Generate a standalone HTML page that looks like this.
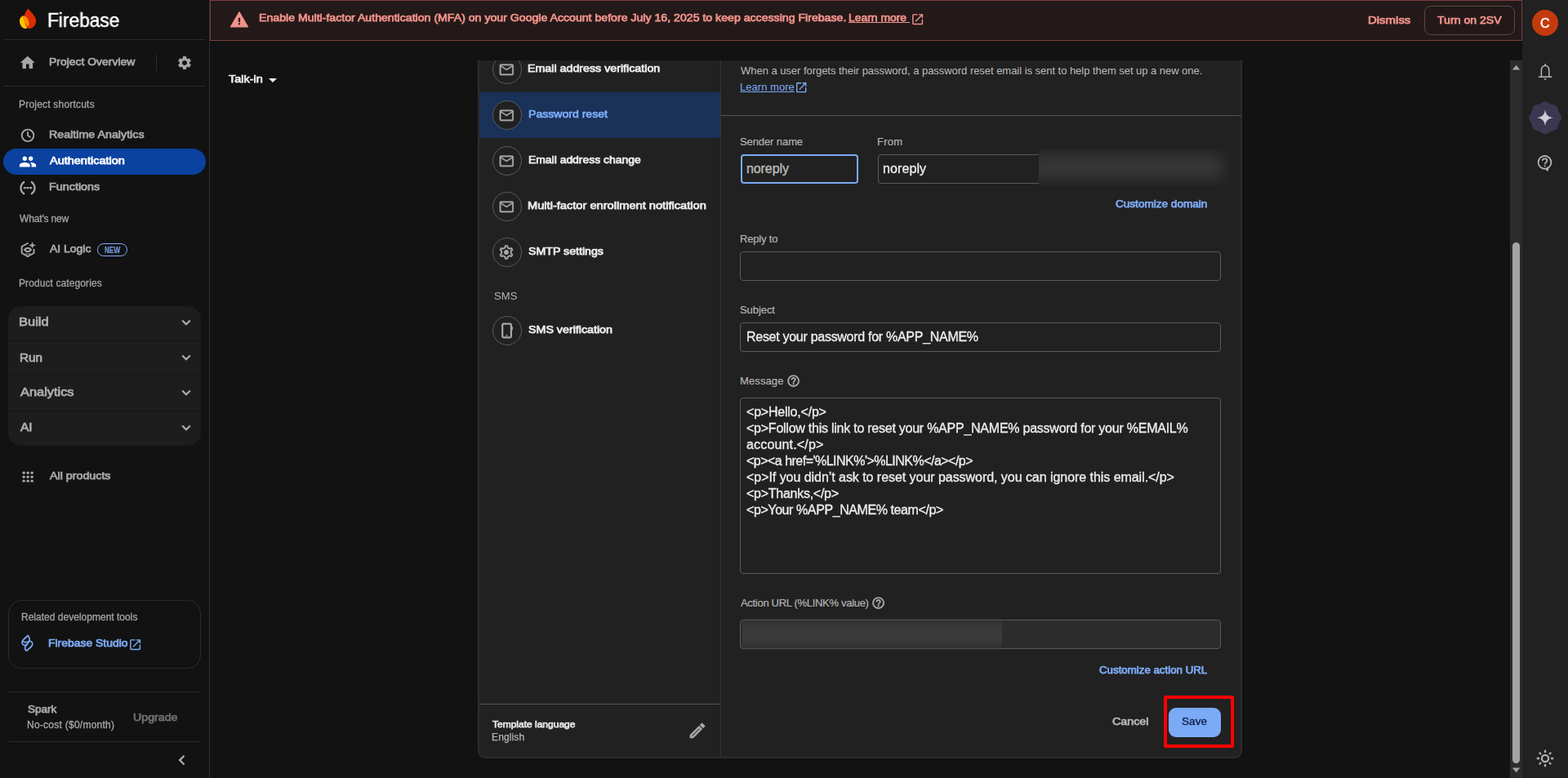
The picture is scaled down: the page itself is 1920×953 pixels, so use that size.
<!DOCTYPE html>
<html lang="en">
<head>
<meta charset="utf-8">
<title>Firebase console - Authentication templates</title>
<style>
*{box-sizing:border-box;margin:0;padding:0}
html,body{width:1920px;height:953px;overflow:hidden;background:#121212}
body{position:relative;font-family:"Liberation Sans",Arial,sans-serif;font-size:14px;color:#e3e3e3;-webkit-font-smoothing:antialiased}
.abs,.t,.ic{position:absolute}
.t{white-space:nowrap;line-height:20px;font-size:14px;will-change:transform;transform-origin:0 50%}
.lcd{will-change:auto}
.b{font-weight:normal;font-size:13px;-webkit-text-stroke:0.75px currentColor}
svg{display:block}
.ic svg{width:100%;height:100%}
/* ---------- sidebar ---------- */
#side{position:absolute;left:0;top:0;width:257px;height:953px;background:#121212;border-right:1px solid #2d2d2d}
.hr{position:absolute;height:1px;background:#2a2a2a}
.nav{color:#a8a8a8}
.sec{color:#a4a4a4;font-size:12px;-webkit-text-stroke:0.300px currentColor}
#pill{position:absolute;left:4px;top:182px;width:248px;height:32px;border-radius:16px;background:#0b419f}
#cats{position:absolute;left:10px;top:375px;width:236px;height:171px;border-radius:16px;background:#1d1d1d;overflow:hidden}
#cats .sep{position:absolute;left:0;width:236px;height:1px;background:#141414}
.cat{font-size:15px;color:#b0b0b0}
#tools{position:absolute;left:10px;top:735px;width:236px;height:84px;border-radius:16px;border:1px solid #2b2b2b}
/* ---------- banner ---------- */
#banner{position:absolute;left:257px;top:0;width:1607px;height:50px;background:#241919;border:1px solid #7d3f3f}
.warn{color:#f1928b}
#twosv{position:absolute;left:1744px;top:7px;width:111px;height:36px;border:1px solid #594848;border-radius:8px}
/* ---------- right rail ---------- */
#rail{position:absolute;left:1864px;top:0;width:56px;height:953px;background:#212121}
#avatar{position:absolute;left:1876px;top:12px;width:32px;height:32px;border-radius:50%;background:#c53a0c}
/* ---------- scrollbar ---------- */
#sbar{position:absolute;left:1849px;top:74px;width:15px;height:879px;background:#2c2c2c}
#thumb{position:absolute;left:1852px;top:297px;width:9px;height:638px;border-radius:5px;background:#a4a4a4}
/* ---------- card ---------- */
#card{position:absolute;left:585px;top:74px;width:936px;height:855px;background:#212121;border:2px solid #2c2c2c;border-top:0;border-radius:0 0 9px 9px}
#vsep{position:absolute;left:882px;top:74px;width:1px;height:854px;background:#343434}
#hl{position:absolute;left:587px;top:113px;width:295px;height:56px;background:#1a3158}
.circ{position:absolute;left:603px;width:36px;height:36px;border-radius:50%;border:1px solid #565d67;background:#212121}
.li{color:#ececec;font-size:13px;-webkit-text-stroke:0.75px currentColor}
.lab{font-size:13px;color:#b4b4b4;-webkit-text-stroke:0.200px currentColor}
.inp{position:absolute;left:906px;width:589px;height:36px;border:1px solid #565b62;border-radius:4px;background:#212121}
.val{font-size:16px;color:#ececec;-webkit-text-stroke:0.350px currentColor}
.link{color:#7daaf5}
</style>
</head>
<body>
<div id="side">
<!-- logo -->
<svg class="abs" style="left:23px;top:10px" width="22" height="26" viewBox="0 0 22 26">
  <clipPath id="flameclip"><path d="M11.500 0.400C13.500 3 17.500 6.800 19.600 10.500 20.800 12.600 21.200 14.400 21.100 16.200 20.800 21.200 17 25 12.200 25 10.600 24.600 8.700 22.200 7.500 18.800 6.500 15.800 6.200 12.800 6.500 10.200 7 6.500 9 3 11.500 0.400Z"/></clipPath>
  <ellipse cx="6.700" cy="17.300" rx="5.500" ry="7.900" transform="rotate(-16 6.700 17.300)" fill="#ffc400"/>
  <path d="M11.500 0.400C13.500 3 17.500 6.800 19.600 10.500 20.800 12.600 21.200 14.400 21.100 16.200 20.800 21.200 17 25 12.200 25 10.600 24.600 8.700 22.200 7.500 18.800 6.500 15.800 6.200 12.800 6.500 10.200 7 6.500 9 3 11.500 0.400Z" fill="#dd2c00"/>
  <ellipse cx="6.700" cy="17.300" rx="5.500" ry="7.900" transform="rotate(-16 6.700 17.300)" fill="#ff9100" clip-path="url(#flameclip)"/>
</svg>
<div class="t" id="t_logo" style="left:58px;top:10px;font-size:23.500px;-webkit-text-stroke:0.500px #fff;transform:scaleX(0.9669);line-height:30px;color:#fff">Firebase</div>
<div class="hr" style="left:4px;top:48px;width:248px"></div>
<!-- project overview -->
<div class="ic" style="left:23.200px;top:66.400px;width:21.600px;height:21.600px"><svg viewBox="0 0 24 24" fill="#a6a6a6"><path d="M10 20v-6h4v6h5v-8h3L12 3 2 12h3v8z"/></svg></div>
<div class="t b nav" id="t_po" style="left:60px;top:66px;transform:scaleX(1.0723)">Project Overview</div>
<div class="abs" style="left:191px;top:67px;width:1px;height:20px;background:#2d2d2d"></div>
<div class="ic" style="left:216px;top:67px;width:20px;height:20px"><svg viewBox="0 0 24 24" fill="#a6a6a6"><path d="M19.14 12.94c.04-.3.06-.61.06-.94 0-.32-.02-.64-.07-.94l2.03-1.58c.18-.14.23-.41.12-.61l-1.92-3.32c-.12-.22-.37-.29-.59-.22l-2.39.96c-.5-.38-1.03-.7-1.62-.94l-.36-2.54c-.04-.24-.24-.41-.48-.41h-3.84c-.24 0-.43.17-.47.41l-.36 2.54c-.59.24-1.13.57-1.62.94l-2.39-.96c-.22-.08-.47 0-.59.22L2.74 8.87c-.12.21-.08.47.12.61l2.03 1.58c-.05.3-.09.63-.09.94s.02.64.07.94l-2.03 1.58c-.18.14-.23.41-.12.61l1.92 3.32c.12.22.37.29.59.22l2.39-.96c.5.38 1.03.7 1.62.94l.36 2.54c.05.24.24.41.48.41h3.84c.24 0 .44-.17.47-.41l.36-2.54c.59-.24 1.13-.56 1.62-.94l2.39.96c.22.08.47 0 .59-.22l1.92-3.32c.12-.22.07-.47-.12-.61l-2.01-1.58zM12 15.6c-1.98 0-3.6-1.62-3.6-3.6s1.62-3.6 3.6-3.6 3.6 1.62 3.6 3.6-1.62 3.6-3.6 3.6z"/></svg></div>
<div class="hr" style="left:4px;top:105px;width:248px"></div>
<!-- shortcuts -->
<div class="t sec" id="t_ps" style="left:23px;top:118px;letter-spacing:0.205px">Project shortcuts</div>
<div class="ic" style="left:24px;top:156px;width:20px;height:20px"><svg viewBox="0 0 20 20" fill="none" stroke="#a6a6a6" stroke-width="1.900"><circle cx="10.050" cy="9.900" r="7.250"/><path d="M10.050 5.300V10.100L13.400 12.200" stroke-width="1.800"/></svg></div>
<div class="t b nav" id="t_ra" style="left:60px;top:155px;transform:scaleX(1.0974)">Realtime Analytics</div>
<div id="pill"></div>
<div class="ic" style="left:23px;top:187px;width:22px;height:22px"><svg viewBox="0 0 24 24" fill="#ffffff"><path d="M16 11c1.66 0 2.99-1.34 2.99-3S17.66 5 16 5c-1.66 0-3 1.34-3 3s1.34 3 3 3zm-8 0c1.66 0 2.99-1.34 2.99-3S9.66 5 8 5C6.34 5 5 6.34 5 8s1.34 3 3 3zm0 2c-2.33 0-7 1.17-7 3.5V19h14v-2.5c0-2.33-4.67-3.5-7-3.5zm8 0c-.29 0-.62.02-.97.05 1.16.84 1.97 1.97 1.97 3.45V19h6v-2.5c0-2.33-4.67-3.5-7-3.5z"/></svg></div>
<div class="t b" id="t_au" style="left:61px;top:187px;color:#fff;transform:scaleX(1.1141)">Authentication</div>
<div class="ic" style="left:24px;top:220px;width:20px;height:20px"><svg viewBox="0 0 20 20" fill="none" stroke="#a6a6a6" stroke-width="2.300"><path d="M6 2.500C3 4.500 1.500 7 1.500 10.200S3 15.900 6 17.900"/><path d="M14 2.500C17 4.500 18.500 7 18.500 10.200S17 15.900 14 17.900"/><path d="M4.800 10.200H15.200" stroke-width="2.300" stroke-dasharray="3 0.700"/></svg></div>
<div class="t b nav" id="t_fn" style="left:60px;top:219px;transform:scaleX(1.1037)">Functions</div>
<!-- what's new -->
<div class="t sec" id="t_wn" style="left:24px;top:258px;letter-spacing:-0.157px">What's new</div>
<svg class="abs" style="left:22px;top:292px" width="26" height="26" viewBox="22 292 26 26"><path d="M33.900 298 26.700 302V310L34 314.200 41.500 310V305.600" fill="none" stroke="#a6a6a6" stroke-width="1.900" stroke-linejoin="round" stroke-linecap="round"/><path d="M30 306 32.300 304H35.700L38 306 35.700 308H32.300Z" fill="none" stroke="#a6a6a6" stroke-width="2" stroke-linejoin="round"/><path d="M30.800 310.600C32.800 311.400 35.200 311.400 37.200 310.600" fill="none" stroke="#a6a6a6" stroke-width="1.100"/><path d="M39.6 296.0C40.0 298.9 41.2 300.0 44.4 300.4 41.2 300.79999999999995 40.0 301.9 39.6 304.79999999999995 39.2 301.9 38.0 300.79999999999995 34.800000000000004 300.4 38.0 300.0 39.2 298.9 39.6 296.0Z" fill="#a6a6a6"/></svg>
<div class="t b nav" id="t_al" style="left:61px;top:295px;transform:scaleX(1.0733)">AI Logic</div>
<div class="abs" style="left:119px;top:298px;width:37px;height:16px;border:1px solid #7baaf7;border-radius:8px"></div>
<div class="t b" id="t_new" style="left:128px;top:300px;font-size:10px;font-weight:bold;-webkit-text-stroke:0;transform:scaleX(0.8149);line-height:14px;color:#7baaf7">NEW</div>
<!-- categories -->
<div class="t sec" id="t_pc" style="left:23px;top:337px;letter-spacing:0.099px">Product categories</div>
<div id="cats"><div class="sep" style="top:42px"></div><div class="sep" style="top:85px"></div><div class="sep" style="top:128px"></div></div>
<div class="t b cat" id="t_c1" style="left:23px;top:384px;transform:scaleX(1.0983)">Build</div>
<div class="t b cat" id="t_c2" style="left:24px;top:428px;transform:scaleX(1.0179)">Run</div>
<div class="t b cat" id="t_c3" style="left:25px;top:470px;transform:scaleX(1.0915)">Analytics</div>
<div class="t b cat" id="t_c4" style="left:25px;top:513px;transform:scaleX(1.0351)">AI</div>
<svg class="abs" style="left:218px;top:385px" width="20" height="20" viewBox="0 0 20 20"><path d="M5.200 7.500 10 12.300 14.800 7.500" fill="none" stroke="#b0b0b0" stroke-width="2"/></svg>
<svg class="abs" style="left:218px;top:428px" width="20" height="20" viewBox="0 0 20 20"><path d="M5.200 7.500 10 12.300 14.800 7.500" fill="none" stroke="#b0b0b0" stroke-width="2"/></svg>
<svg class="abs" style="left:218px;top:471px" width="20" height="20" viewBox="0 0 20 20"><path d="M5.200 7.500 10 12.300 14.800 7.500" fill="none" stroke="#b0b0b0" stroke-width="2"/></svg>
<svg class="abs" style="left:218px;top:514px" width="20" height="20" viewBox="0 0 20 20"><path d="M5.200 7.500 10 12.300 14.800 7.500" fill="none" stroke="#b0b0b0" stroke-width="2"/></svg>
<!-- all products -->
<div class="ic" style="left:26.800px;top:576.900px;width:14.300px;height:14.300px"><svg viewBox="0 0 16 16" fill="#a6a6a6"><circle cx="2.400" cy="2.400" r="1.900"/><circle cx="8" cy="2.400" r="1.900"/><circle cx="13.600" cy="2.400" r="1.900"/><circle cx="2.400" cy="8" r="1.900"/><circle cx="8" cy="8" r="1.900"/><circle cx="13.600" cy="8" r="1.900"/><circle cx="2.400" cy="13.600" r="1.900"/><circle cx="8" cy="13.600" r="1.900"/><circle cx="13.600" cy="13.600" r="1.900"/></svg></div>
<div class="t b nav" id="t_ap" style="left:61px;top:573px;transform:scaleX(1.0969)">All products</div>
<!-- related tools -->
<div id="tools"></div>
<div class="t sec" id="t_rd" style="left:26px;top:746px;letter-spacing:0.014px">Related development tools</div>
<svg class="abs" style="left:24px;top:775px" width="20" height="26" viewBox="24 775 20 26" fill="none" stroke="#7baaf7" stroke-width="1.700" stroke-linejoin="round"><path d="M34.400 778.400C31.500 781 28.800 783 27.600 785 26.500 787 27 789 28.800 789.900 30.500 790.700 32.300 790 33.600 788.800 35.600 787 36.300 785 36.200 783 36.100 781.200 35.400 779.700 34.400 778.400Z"/><path d="M28.200 785.500C29.800 787 32.500 787.200 35.800 785.600"/><path d="M32.400 797.400C35.300 794.700 38 792.700 39.200 790.700 40.300 788.700 39.800 786.700 38 785.800 37.300 785.400 36.600 785.300 35.900 785.500M33.600 788.800C32.200 790.500 30.800 791.500 30.600 793 30.400 794.700 31.200 796.200 32.400 797.400"/></svg>
<div class="t b link" id="t_fs" style="left:59px;top:778px;transform:scaleX(1.0718)">Firebase Studio</div>
<div class="ic" style="left:157px;top:780.700px;width:17.300px;height:17.300px"><svg viewBox="0 0 24 24" fill="#7baaf7"><path d="M19 19H5V5h7V3H5c-1.110 0-2 .9-2 2v14c0 1.100.890 2 2 2h14c1.100 0 2-.9 2-2v-7h-2v7zM14 3v2h3.590l-9.830 9.830 1.410 1.410L19 6.410V10h2V3h-7z"/></svg></div>
<!-- plan -->
<div class="hr" style="left:10px;top:847px;width:236px"></div>
<div class="t b nav" id="t_sp" style="left:34px;top:859px;transform:scaleX(1.0423)">Spark</div>
<div class="t nav" id="t_nc" style="left:33px;top:878px;font-size:12px;-webkit-text-stroke:0.300px currentColor;letter-spacing:0.255px">No-cost ($0/month)</div>
<div class="t b" id="t_up" style="left:163px;top:869px;color:#6f6f6f;transform:scaleX(1.0911)">Upgrade</div>
<div class="hr" style="left:10px;top:908px;width:236px"></div>
<svg class="abs" style="left:212px;top:921px" width="20" height="20" viewBox="212 921 20 20"><path d="M225.500 925.700 220.100 931.100 225.500 936.500" fill="none" stroke="#b0b0b0" stroke-width="2.200"/></svg>
</div>
<div id="banner"></div>
<svg class="abs" style="left:280px;top:12px" width="26" height="24" viewBox="280 12 26 24"><path d="M293 14.700 303.500 32.800H282.500Z" fill="#f1928b" stroke="#f1928b" stroke-width="1.200" stroke-linejoin="round"/><rect x="291.900" y="21.800" width="2.200" height="5.300" fill="#241919"/><rect x="291.900" y="28.300" width="2.200" height="2" fill="#241919"/></svg>
<div class="t b warn" id="t_bn" style="left:317px;top:12px;transform:scaleX(1.0867)">Enable Multi-factor Authentication (MFA) on your Google Account before July 16, 2025 to keep accessing Firebase.</div>
<div class="t b warn" id="t_lm1" style="left:1039px;top:12px;text-decoration:underline;transform:scaleX(1.0694)">Learn more&nbsp;</div>
<div class="ic" style="left:1114.500px;top:15.400px;width:17.300px;height:17.300px"><svg viewBox="0 0 24 24" fill="#f1928b"><path d="M19 19H5V5h7V3H5c-1.110 0-2 .9-2 2v14c0 1.100.890 2 2 2h14c1.100 0 2-.9 2-2v-7h-2v7zM14 3v2h3.590l-9.830 9.830 1.410 1.410L19 6.410V10h2V3h-7z"/></svg></div>
<div class="t b warn" id="t_dm" style="left:1675px;top:15px;transform:scaleX(1.1503)">Dismiss</div>
<div id="twosv"></div>
<div class="t b warn" id="t_2sv" style="left:1760px;top:15px;transform:scaleX(1.0847)">Turn on 2SV</div>
<div class="t b" id="t_ti" style="left:280px;top:87px;color:#ececec;transform:scaleX(1.1087)">Talk-in</div>
<div class="abs" style="left:329px;top:96px;width:0;height:0;border-left:5px solid transparent;border-right:5px solid transparent;border-top:5px solid #ececec"></div>
<div id="rail"></div>
<div id="avatar"></div>
<div class="t" id="t_av" style="left:1886px;top:18px;font-size:16px;-webkit-text-stroke:0.500px #fff;line-height:22px;color:#fff;letter-spacing:0.000px">C</div>
<svg class="abs" style="left:1880px;top:76px" width="24" height="24" viewBox="1880 76 24 24"><path d="M1887.400 93.600V86.600C1887.400 83 1889.300 80.600 1892.100 80.600 1894.900 80.600 1896.800 83 1896.800 86.600V93.600" fill="none" stroke="#b4b4b4" stroke-width="1.500"/><path d="M1884 94.200H1900.300" stroke="#b4b4b4" stroke-width="1.600"/><circle cx="1892.100" cy="79.300" r="1.100" fill="#b4b4b4"/><path d="M1890.500 96.300h3.200a1.600 1.600 0 0 1-3.200 0z" fill="#b4b4b4"/></svg>
<svg class="abs" style="left:1870px;top:122px" width="44" height="44" viewBox="1870 122 44 44"><path d="M1911.9 144.2 L1911.8 145.1 L1911.6 145.9 L1911.3 146.7 L1910.9 147.5 L1910.4 148.3 L1909.9 149.0 L1909.5 149.7 L1909.1 150.4 L1908.7 151.1 L1908.5 151.9 L1908.2 152.7 L1908.1 153.5 L1907.9 154.3 L1907.7 155.2 L1907.4 156.0 L1907.1 156.9 L1906.6 157.6 L1906.1 158.3 L1905.4 158.8 L1904.7 159.3 L1903.8 159.6 L1903.0 159.9 L1902.1 160.1 L1901.3 160.3 L1900.5 160.4 L1899.7 160.7 L1898.9 160.9 L1898.2 161.3 L1897.5 161.7 L1896.8 162.1 L1896.1 162.6 L1895.3 163.1 L1894.5 163.5 L1893.7 163.8 L1892.9 164.0 L1892.0 164.1 L1891.1 164.0 L1890.3 163.8 L1889.5 163.5 L1888.7 163.1 L1887.9 162.6 L1887.2 162.1 L1886.5 161.7 L1885.8 161.3 L1885.1 160.9 L1884.3 160.7 L1883.5 160.4 L1882.7 160.3 L1881.9 160.1 L1881.0 159.9 L1880.2 159.6 L1879.3 159.3 L1878.6 158.8 L1877.9 158.3 L1877.4 157.6 L1876.9 156.9 L1876.6 156.0 L1876.3 155.2 L1876.1 154.3 L1875.9 153.5 L1875.8 152.7 L1875.5 151.9 L1875.3 151.1 L1874.9 150.4 L1874.5 149.7 L1874.1 149.0 L1873.6 148.3 L1873.1 147.5 L1872.7 146.7 L1872.4 145.9 L1872.2 145.1 L1872.1 144.2 L1872.2 143.3 L1872.4 142.5 L1872.7 141.7 L1873.1 140.9 L1873.6 140.1 L1874.1 139.4 L1874.5 138.7 L1874.9 138.0 L1875.3 137.3 L1875.5 136.5 L1875.8 135.7 L1875.9 134.9 L1876.1 134.1 L1876.3 133.2 L1876.6 132.4 L1876.9 131.5 L1877.4 130.8 L1877.9 130.1 L1878.6 129.6 L1879.3 129.1 L1880.2 128.8 L1881.0 128.5 L1881.9 128.3 L1882.7 128.1 L1883.5 128.0 L1884.3 127.7 L1885.1 127.5 L1885.8 127.1 L1886.5 126.7 L1887.2 126.3 L1887.9 125.8 L1888.7 125.3 L1889.5 124.9 L1890.3 124.6 L1891.1 124.4 L1892.0 124.3 L1892.9 124.4 L1893.7 124.6 L1894.5 124.9 L1895.3 125.3 L1896.1 125.8 L1896.8 126.3 L1897.5 126.7 L1898.2 127.1 L1898.9 127.5 L1899.7 127.7 L1900.5 128.0 L1901.3 128.1 L1902.1 128.3 L1903.0 128.5 L1903.8 128.8 L1904.7 129.1 L1905.4 129.6 L1906.1 130.1 L1906.6 130.8 L1907.1 131.5 L1907.4 132.4 L1907.7 133.2 L1907.9 134.1 L1908.1 134.9 L1908.2 135.7 L1908.5 136.5 L1908.7 137.3 L1909.1 138.0 L1909.5 138.7 L1909.9 139.4 L1910.4 140.1 L1910.9 140.9 L1911.3 141.7 L1911.6 142.5 L1911.8 143.3Z" fill="#3c3751"/><path d="M1892.0 134.0C1892.7 140.6 1895.6 143.5 1902.2 144.2 1895.6 144.89999999999998 1892.7 147.79999999999998 1892.0 154.39999999999998 1891.3 147.79999999999998 1888.4 144.89999999999998 1881.8 144.2 1888.4 143.5 1891.3 140.6 1892.0 134.0Z" fill="#cfcdd8"/></svg>
<svg class="abs" style="left:1880px;top:188px" width="24" height="24" viewBox="1880 188 24 24"><circle cx="1891.500" cy="198.900" r="7.900" fill="none" stroke="#b4b4b4" stroke-width="1.800"/><path d="M1891.600 206.500 1895.400 210.300 1896.800 204.500Z" fill="#b4b4b4"/><path d="M1888.700 197.100C1888.700 195.400 1890 194.300 1891.600 194.300S1894.400 195.400 1894.400 196.900C1894.400 198.800 1891.700 199 1891.600 201.300" fill="none" stroke="#b4b4b4" stroke-width="1.700"/><rect x="1890.700" y="202.400" width="1.800" height="1.800" fill="#b4b4b4"/></svg>
<div class="ic" style="left:1880px;top:917px;width:24px;height:24px"><svg viewBox="0 0 24 24" fill="none" stroke="#b0b0b0" stroke-width="2"><circle cx="12" cy="12" r="4.100" stroke-width="2.300"/><path d="M12 1.800v3.200M12 19v3.200M1.800 12h3.200M19 12h3.200M4.800 4.800l2.200 2.200M17 17l2.200 2.200M4.800 19.200l2.200-2.200M17 7l2.200-2.200" stroke-width="2.300"/></svg></div>
<div id="sbar"></div>
<svg class="abs" style="left:1849px;top:74px" width="15" height="15" viewBox="0 0 15 15"><path d="M7.500 5.700 12.200 11.400H2.800Z" fill="#a4a4a4"/></svg>
<svg class="abs" style="left:1849px;top:938px" width="15" height="15" viewBox="0 0 15 15"><path d="M7.500 8.300 12.200 2.600H2.800Z" fill="#a4a4a4"/></svg>
<div id="thumb"></div>
<div id="card"></div>
<div id="vsep"></div>
<div id="hl"></div>
<div class="circ" style="top:67px;clip-path:inset(7px 0 0 0)"></div><div class="ic" style="left:610.300px;top:75px;width:20.600px;height:20.600px"><svg viewBox="0 0 24 24" fill="#a8a8a8" stroke="#a8a8a8" stroke-width="0.300"><path d="M20 4H4c-1.100 0-1.990.9-1.990 2L2 18c0 1.100.9 2 2 2h16c1.100 0 2-.9 2-2V6c0-1.100-.9-2-2-2zm0 14H4V8l8 5 8-5v10zm-8-7L4 6h16l-8 5z"/></svg></div>
<div class="t li" id="t_l1" style="left:646px;top:74px;transform:scaleX(1.0952)">Email address verification</div>
<div class="circ" style="top:123px"></div><div class="ic" style="left:610.300px;top:131px;width:20.600px;height:20.600px"><svg viewBox="0 0 24 24" fill="#a8a8a8" stroke="#a8a8a8" stroke-width="0.300"><path d="M20 4H4c-1.100 0-1.990.9-1.990 2L2 18c0 1.100.9 2 2 2h16c1.100 0 2-.9 2-2V6c0-1.100-.9-2-2-2zm0 14H4V8l8 5 8-5v10zm-8-7L4 6h16l-8 5z"/></svg></div>
<div class="t li" id="t_l2" style="left:647px;top:130px;color:#7baaf7;transform:scaleX(1.0820)">Password reset</div>
<div class="circ" style="top:179px"></div><div class="ic" style="left:610.300px;top:187px;width:20.600px;height:20.600px"><svg viewBox="0 0 24 24" fill="#a8a8a8" stroke="#a8a8a8" stroke-width="0.300"><path d="M20 4H4c-1.100 0-1.990.9-1.990 2L2 18c0 1.100.9 2 2 2h16c1.100 0 2-.9 2-2V6c0-1.100-.9-2-2-2zm0 14H4V8l8 5 8-5v10zm-8-7L4 6h16l-8 5z"/></svg></div>
<div class="t li" id="t_l3" style="left:647px;top:186px;transform:scaleX(1.0699)">Email address change</div>
<div class="circ" style="top:235px"></div><div class="ic" style="left:610.300px;top:243px;width:20.600px;height:20.600px"><svg viewBox="0 0 24 24" fill="#a8a8a8" stroke="#a8a8a8" stroke-width="0.300"><path d="M20 4H4c-1.100 0-1.990.9-1.990 2L2 18c0 1.100.9 2 2 2h16c1.100 0 2-.9 2-2V6c0-1.100-.9-2-2-2zm0 14H4V8l8 5 8-5v10zm-8-7L4 6h16l-8 5z"/></svg></div>
<div class="t li" id="t_l4" style="left:646px;top:242px;transform:scaleX(1.1256)">Multi-factor enrollment notification</div>
<div class="circ" style="top:291px"></div><svg class="abs" style="left:610.300px;top:299px" width="20" height="20" viewBox="0 0 20 20"><path d="M8.40 4.32 L8.75 2.10 L11.25 2.10 L11.60 4.32 L14.12 5.77 L16.22 4.97 L17.47 7.13 L15.72 8.55 L15.72 11.45 L17.47 12.87 L16.22 15.03 L14.12 14.23 L11.60 15.68 L11.25 17.90 L8.75 17.90 L8.40 15.68 L5.88 14.23 L3.78 15.03 L2.53 12.87 L4.28 11.45 L4.28 8.55 L2.53 7.13 L3.78 4.97 L5.88 5.77Z" fill="none" stroke="#a8a8a8" stroke-width="1.900" stroke-linejoin="round"/><circle cx="10" cy="10" r="2.900" fill="#a8a8a8"/></svg>
<div class="t li" id="t_l5" style="left:647px;top:298px;transform:scaleX(1.0901)">SMTP settings</div>
<div class="t" id="t_sms" style="left:605px;top:353px;font-size:13px;color:#b4b4b4;letter-spacing:0.095px">SMS</div>
<div class="circ" style="top:387px"></div><svg class="abs" style="left:610px;top:393px" width="22" height="24" viewBox="610 393 22 24"><rect x="615.200" y="396.600" width="10.700" height="16.700" rx="1.300" fill="none" stroke="#a8a8a8" stroke-width="2.200"/><rect x="619.400" y="410.200" width="2.100" height="1.300" fill="#a8a8a8"/><rect x="626.800" y="400" width="1.100" height="4.500" rx="0.500" fill="#a8a8a8"/></svg>
<div class="t li" id="t_l6" style="left:647px;top:394px;transform:scaleX(1.0962)">SMS verification</div>
<div class="abs" style="left:587px;top:862px;width:295px;height:1px;background:#50555b"></div>
<div class="t b" id="t_tl" style="left:603px;top:877px;font-size:11.300px;color:#e4e4e4;transform:scaleX(1.0622)">Template language</div>
<div class="t" id="t_en" style="left:602px;top:893px;font-size:12px;-webkit-text-stroke:0.250px currentColor;color:#b4b4b4;letter-spacing:0.134px">English</div>
<div class="ic" style="left:841.600px;top:882.800px;width:24px;height:24px"><svg viewBox="0 0 24 24" fill="#a8a8a8" stroke="#a8a8a8" stroke-width="0.700"><path d="M14.060 9.020l.920.920L5.920 19H5v-.920l9.060-9.060M17.660 3c-.250 0-.510.100-.7.290l-1.830 1.830 3.750 3.750 1.830-1.830c.390-.390.390-1.020 0-1.410l-2.340-2.340c-.2-.2-.450-.290-.710-.290zm-3.600 3.190L3 17.250V21h3.750L17.810 9.940l-3.750-3.750z"/></svg></div>
<!-- right panel -->
<div class="t lcd" id="t_d1" style="left:907px;top:77px;font-size:13px;color:#bdbdbd;letter-spacing:-0.035px">When a user forgets their password, a password reset email is sent to help them set up a new one.</div>
<div class="t link lcd" id="t_lm2" style="left:906px;top:97px;font-size:13px;text-decoration:underline;letter-spacing:0.036px">Learn more</div>
<div class="ic" style="left:973.100px;top:99.400px;width:16.400px;height:16.400px"><svg viewBox="0 0 24 24" fill="#7baaf7"><path d="M19 19H5V5h7V3H5c-1.110 0-2 .9-2 2v14c0 1.100.890 2 2 2h14c1.100 0 2-.9 2-2v-7h-2v7zM14 3v2h3.590l-9.830 9.830 1.410 1.410L19 6.410V10h2V3h-7z"/></svg></div>
<div class="abs" style="left:883px;top:141px;width:637px;height:1px;background:#50555b"></div>
<div class="t lab lcd" id="t_sn" style="left:906px;top:164px;letter-spacing:-0.095px">Sender name</div>
<div class="t lab lcd" id="t_fr" style="left:1074px;top:164px;letter-spacing:0.229px">From</div>
<div class="inp" style="left:907px;top:189px;width:144px;border:2px solid #7baaf7"></div>
<div class="t val lcd" id="t_v1" style="left:914px;top:197px;color:#bdbdbd;letter-spacing:-0.090px">noreply</div>
<div class="inp" style="left:1075px;top:189px;width:420px"></div>
<div class="t val" id="t_v2" style="left:1081px;top:197px;letter-spacing:0.095px">noreply</div>
<div class="abs" id="blur1" style="left:1272px;top:182px;width:234px;height:45px;background:#222222;overflow:hidden"><div class="abs" style="left:-14px;top:7px;width:240px;height:31px;border-radius:10px;background:#363636;filter:blur(8px)"></div></div>
<div class="t b link" id="t_cd" style="left:1366px;top:240px;font-size:12.200px;transform:scaleX(1.1130)">Customize domain</div>
<div class="t lab lcd" id="t_rt" style="left:906px;top:283px;letter-spacing:-0.164px">Reply to</div>
<div class="inp" style="top:308px"></div>
<div class="t lab lcd" id="t_sj" style="left:906px;top:370px;letter-spacing:-0.070px">Subject</div>
<div class="inp" style="top:395px"></div>
<div class="t val" id="t_v3" style="left:914px;top:403px;letter-spacing:-0.284px">Reset your password for %APP_NAME%</div>
<div class="t lab lcd" id="t_ms" style="left:906px;top:457px;letter-spacing:0.114px">Message</div>
<div class="ic" style="left:962.8px;top:458.3px;width:17.200px;height:17.200px"><svg viewBox="0 0 24 24" fill="#b4b4b4" stroke="#b4b4b4" stroke-width="0.500"><path d="M11 18h2v-2h-2v2zm1-16C6.480 2 2 6.480 2 12s4.480 10 10 10 10-4.480 10-10S17.520 2 12 2zm0 18c-4.410 0-8-3.590-8-8s3.590-8 8-8 8 3.590 8 8-3.590 8-8 8zm0-14c-2.210 0-4 1.790-4 4h2c0-1.100.9-2 2-2s2 .9 2 2c0 2-3 1.750-3 5h2c0-2.250 3-2.500 3-5 0-2.210-1.790-4-4-4z"/></svg></div>
<div class="inp" style="top:487px;height:216px"></div>
<div class="t val" id="t_m1" style="left:914px;top:495px;letter-spacing:-0.218px">&lt;p&gt;Hello,&lt;/p&gt;</div>
<div class="t val" id="t_m2" style="left:914px;top:515px;letter-spacing:-0.244px">&lt;p&gt;Follow this link to reset your %APP_NAME% password for your %EMAIL%</div>
<div class="t val" id="t_m3" style="left:914px;top:535px;letter-spacing:0.165px">account.&lt;/p&gt;</div>
<div class="t val" id="t_m4" style="left:914px;top:555px;letter-spacing:-0.521px">&lt;p&gt;&lt;a href='%LINK%'&gt;%LINK%&lt;/a&gt;&lt;/p&gt;</div>
<div class="t val" id="t_m5" style="left:914px;top:575px;letter-spacing:-0.047px">&lt;p&gt;If you didn’t ask to reset your password, you can ignore this email.&lt;/p&gt;</div>
<div class="t val" id="t_m6" style="left:914px;top:595px;letter-spacing:-0.267px">&lt;p&gt;Thanks,&lt;/p&gt;</div>
<div class="t val" id="t_m7" style="left:914px;top:615px;letter-spacing:-0.413px">&lt;p&gt;Your %APP_NAME% team&lt;/p&gt;</div>
<div class="t lab lcd" id="t_ac" style="left:907px;top:729px;letter-spacing:-0.305px">Action URL (%LINK% value)</div>
<div class="ic" style="left:1066.8px;top:730.3px;width:17.200px;height:17.200px"><svg viewBox="0 0 24 24" fill="#b4b4b4" stroke="#b4b4b4" stroke-width="0.500"><path d="M11 18h2v-2h-2v2zm1-16C6.480 2 2 6.480 2 12s4.480 10 10 10 10-4.480 10-10S17.520 2 12 2zm0 18c-4.410 0-8-3.590-8-8s3.590-8 8-8 8 3.590 8 8-3.590 8-8 8zm0-14c-2.210 0-4 1.790-4 4h2c0-1.100.9-2 2-2s2 .9 2 2c0 2-3 1.750-3 5h2c0-2.250 3-2.500 3-5 0-2.210-1.790-4-4-4z"/></svg></div>
<div class="inp" style="top:759px;background:#2c2c2c"></div>
<div class="abs" style="left:909px;top:757px;width:318px;height:40px;overflow:hidden"><div class="abs" style="left:-10px;top:5px;width:340px;height:30px;background:#3a3a3a;filter:blur(6px)"></div></div>
<div class="t b link" id="t_ca" style="left:1346px;top:811px;font-size:12.200px;transform:scaleX(1.0906)">Customize action URL</div>
<div class="t b" id="t_cn" style="left:1362px;top:874px;color:#b4b4b4;transform:scaleX(1.0996)">Cancel</div>
<div class="abs" style="left:1431px;top:867px;width:64px;height:36px;border-radius:9px;background:#7baaf7"></div>
<div class="t b" id="t_sv" style="left:1447px;top:874px;color:#0d2145;letter-spacing:0.111px;font-size:13.500px;-webkit-text-stroke:0.350px currentColor">Save</div>
<div class="abs" style="left:1425px;top:852px;width:86px;height:64px;border:4px solid #ff0000;border-radius:2px"></div>
</body>
</html>
